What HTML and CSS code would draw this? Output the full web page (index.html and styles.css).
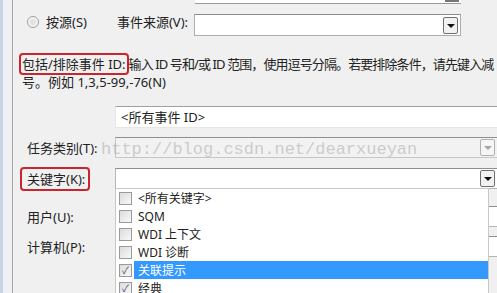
FILE: index.html
```html
<!DOCTYPE html>
<html lang="zh-CN">
<head>
  <meta charset="UTF-8" />
  <title>筛选当前日志</title>
  <link rel="stylesheet" href="styles.css">
</head>
<body>
  <div class="window">
    <div class="frame"></div>
    <div class="content">
      <div class="top-stub"><span class="stub-thumb"></span></div>

      <div class="source-row">
        <span class="radio"></span>
        <span class="radio-label">按源(S)</span>
        <span class="source-label">事件来源(V):</span>
        <div class="combo source-combo"><span class="drop"></span></div>
      </div>

      <p class="hint"><span class="mark">包括/排除事件 ID:</span><span class="hint-rest">输入 ID 号和/或 ID 范围，使用逗号分隔。若要排除条件，请先键入减</span><br />号。例如 1,3,5-99,-76(N)</p>

      <div class="form">
        <div class="row row-id">
          <span class="label"></span>
          <div class="textbox">&lt;所有事件 ID&gt;</div>
        </div>
        <div class="row row-task">
          <span class="label">任务类别(T):</span>
          <div class="combo disabled"><span class="drop"></span></div>
        </div>
        <div class="row row-keyword">
          <span class="label"><span class="mark">关键字(K):</span></span>
          <div class="combo keyword-combo">
            <span class="drop"></span>
            <ul class="dropdown">
              <li><span class="check"></span>&lt;所有关键字&gt;</li>
              <li><span class="check"></span>SQM</li>
              <li><span class="check"></span>WDI 上下文</li>
              <li><span class="check"></span>WDI 诊断</li>
              <li class="selected"><span class="check checked">✓</span><span class="item-text">关联提示</span></li>
              <li><span class="check checked">✓</span>经典</li>
            </ul>
          </div>
        </div>
        <div class="row row-user">
          <span class="label">用户(U):</span>
          <div class="textbox"></div>
        </div>
        <div class="row row-computer">
          <span class="label">计算机(P):</span>
          <div class="textbox"></div>
        </div>
      </div>
    </div>
  </div>
  <div class="watermark">http://blog.csdn.net/dearxueyan</div>
</body>
</html>
```

FILE: styles.css
```css
body {
  margin: 0;
  width: 497px;
  height: 293px;
  overflow: hidden;
  background: #f0f0f0;
  color: #222;
  font-family: "Noto Sans", "Noto Sans CJK SC", sans-serif;
  font-size: 13px;
  position: relative;
}
.window {
  display: flex;
  height: 293px;
}
.frame {
  width: 9px;
  flex: none;
  border-left: 3px solid #c7d4e4;
  border-right: 1px solid #a8a8a8;
  background: #eef0f2;
}
.content {
  flex: 1;
  min-width: 0;
}
.top-stub {
  margin-left: 182px;
  width: 266px;
  height: 3px;
  border-bottom: 1px solid #9a9a9a;
  background: #fff;
  position: relative;
}
.stub-thumb {
  position: absolute;
  right: 2px;
  top: 0;
  width: 14px;
  height: 2px;
  background: #777;
}
.source-row {
  display: flex;
  align-items: flex-start;
  margin-top: 10px;
  height: 22px;
}
.radio {
  margin: 2px 0 0 14px;
  width: 10px;
  height: 10px;
  border: 1px solid #9c9c9c;
  border-radius: 50%;
  background: radial-gradient(circle, #e2e2e2 0 35%, #f7f7f7 60%);
}
.radio-label {
  margin-left: 7px;
  line-height: 16px;
}
.source-label {
  margin-left: 30px;
  line-height: 16px;
}
.combo {
  position: relative;
  height: 21px;
  box-sizing: border-box;
  background: #fff;
  border: 1px solid #abadb3;
  border-top-color: #8a8c92;
}
.source-combo {
  margin-left: 6px;
  width: 267px;
  height: 22px;
}
.drop {
  position: absolute;
  right: 1px;
  top: 1px;
  width: 13px;
  height: 15px;
  border: 1px solid #6f6f6f;
  border-radius: 2px;
  background: #f2f2f2;
}
.source-combo .drop {
  right: 2px;
  top: 2px;
}
.drop::after {
  content: "";
  position: absolute;
  left: 3px;
  top: 6px;
  border-left: 4px solid transparent;
  border-right: 4px solid transparent;
  border-top: 4px solid #111;
}
.hint {
  margin: 19px 0 0 9px;
  line-height: 18px;
  white-space: nowrap;
}
.hint-rest {
  letter-spacing: -0.9px;
}
.mark {
  border: 2px solid #c8262c;
  border-radius: 4px;
  padding: 0 1px;
  margin-left: -3px;
}
.form {
  margin-top: 15px;
}
.row {
  display: flex;
  align-items: center;
  position: relative;
}
.label {
  width: 88px;
  flex: none;
  padding-left: 14px;
}
.textbox,
.row .combo {
  width: 383px;
  flex: none;
  box-sizing: border-box;
  background: #fff;
  border: 1px solid #b4b4b4;
  border-top-color: #8e8e8e;
  height: 21px;
}
.row-id .textbox {
  height: 22px;
  padding-left: 5px;
  line-height: 20px;
  border-color: #e6e6e6;
  border-top-color: #a0a0a0;
}
.row-task {
  margin-top: 9px;
}
.row .disabled {
  background: #f2f2f2;
  border-color: #c6c6c6;
  border-top-color: #8f8f8f;
}
.disabled .drop {
  right: 2px;
  border-color: #b0b0b0;
  background: #f6f6f6;
}
.disabled .drop::after {
  border-top-color: #a6a6a6;
}
.row-keyword {
  margin-top: 10px;
  z-index: 2;
}
.row-keyword .drop {
  right: 2px;
}
.row-keyword .label .mark {
  margin-left: -7px;
  padding: 1px 3px 1px 5px;
}
.row-user {
  margin-top: 17px;
}
.row-computer {
  margin-top: 9px;
}
.dropdown {
  position: absolute;
  top: 100%;
  left: -1px;
  width: 372px;
  margin: 0;
  padding: 0;
  list-style: none;
  background: #fff;
  border: 1px solid #c8c8c8;
  font-size: 12px;
}
.dropdown li {
  display: flex;
  align-items: center;
  height: 18px;
}
.check {
  width: 11px;
  height: 11px;
  margin: 0 6px 0 3px;
  border: 1px solid #9a9a9a;
  background: linear-gradient(135deg, #dcdcdc, #f8f8f8);
  font-size: 10px;
  line-height: 11px;
  text-align: center;
  color: #3a4e7a;
  flex: none;
}
.item-text {
  align-self: stretch;
  flex: 1;
  display: flex;
  align-items: center;
  margin-left: -4px;
  padding-left: 4px;
  background: #3399ff;
  color: #fff;
}
.watermark {
  position: absolute;
  left: 101px;
  top: 140px;
  font-family: "Liberation Mono", monospace;
  font-size: 17px;
  color: rgba(170, 170, 170, 0.55);
  pointer-events: none;
  z-index: 3;
}
```
